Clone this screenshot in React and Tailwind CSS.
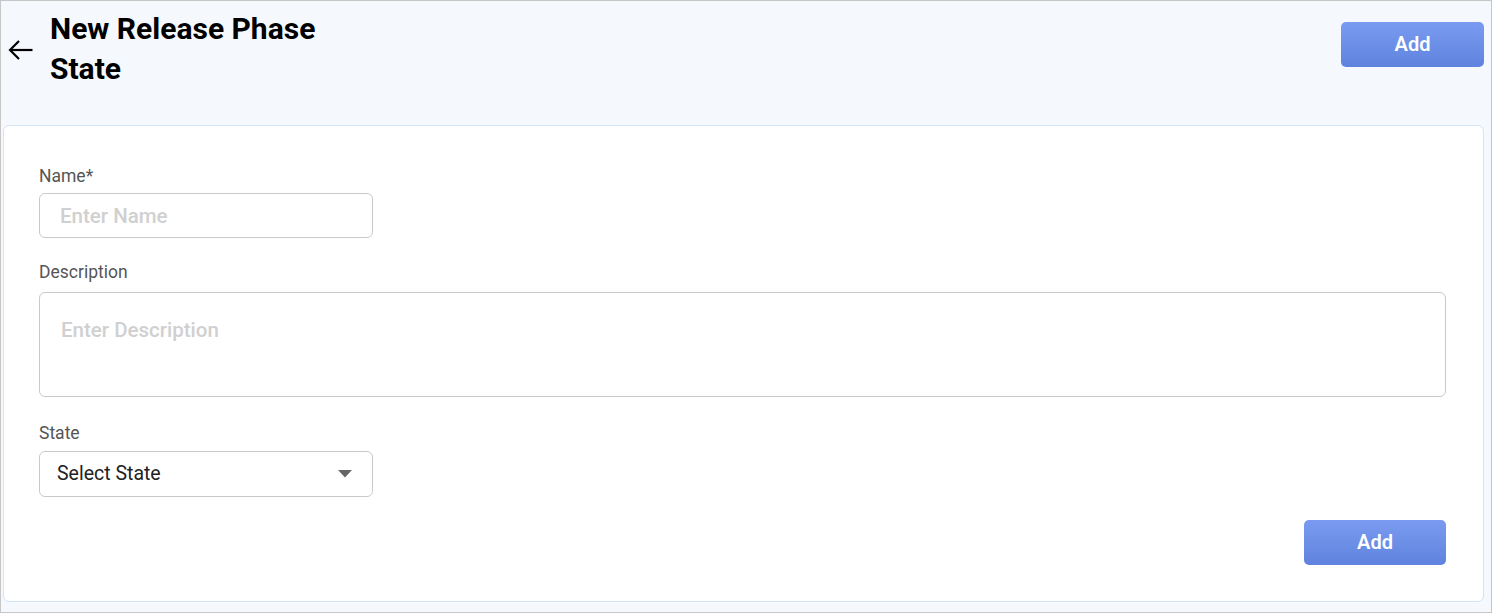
import { useState } from "react";

function BackArrow() {
  return (
    <svg width="25" height="22" viewBox="0 0 25 22" fill="none" stroke="#000" strokeWidth="2.2">
      <path d="M24.5 11H2.5" />
      <path d="M11 2L2 11l9 9" />
    </svg>
  );
}

function AddButton({ className = "" }) {
  return (
    <button
      className={`h-[45px] rounded-[5px] bg-gradient-to-b from-[#7a9bf0] to-[#5f83de] pb-[2px] text-[20px] font-semibold text-white ${className}`}
    >
      Add
    </button>
  );
}

export default function App() {
  const [name, setName] = useState("");
  const [desc, setDesc] = useState("");
  const [state, setState] = useState("");

  return (
    <div
      className="flex h-[613px] w-full flex-col border border-[#c6c6c6] bg-[#f5f8fd] pl-[2px] pr-[7px] pb-[10px]"
      style={{ fontFamily: "Roboto, 'Noto Sans', sans-serif" }}
    >
      <div className="flex h-[124px] items-start justify-between">
        <div className="flex items-start">
          <div className="ml-[5px] mt-[38px]">
            <BackArrow />
          </div>
          <h1 className="ml-[17px] mt-[8px] w-[320px] text-[30px] font-bold leading-[40px] text-black">
            New Release Phase State
          </h1>
        </div>
        <AddButton className="mt-[21px] w-[143px]" />
      </div>

      <div className="flex flex-1 flex-col rounded-[6px] border border-[#d3e4f6] bg-white pl-[35px] pr-[37px] pt-[37px]">
        <label className="text-[17.5px] leading-[26px] text-[#555]">Name*</label>
        <input
          value={name}
          onChange={(e) => setName(e.target.value)}
          placeholder="Enter Name"
          className="mt-[4px] h-[45px] w-[334px] rounded-[6px] border border-[#c9c9c9] px-[20px] text-[20.5px] font-medium text-[#222] outline-none placeholder:text-[#d0d0d0]"
        />

        <label className="mt-[21px] text-[17.5px] leading-[26px] text-[#555]">Description</label>
        <textarea
          value={desc}
          onChange={(e) => setDesc(e.target.value)}
          placeholder="Enter Description"
          className="mt-[7px] h-[105px] w-full resize-none rounded-[6px] border border-[#c9c9c9] px-[21px] pt-[24px] text-[20.5px] font-medium leading-[26px] text-[#222] outline-none placeholder:text-[#d0d0d0]"
        />

        <label className="mt-[23px] text-[17.5px] leading-[26px] text-[#555]">State</label>
        <div className="relative mt-[5px] w-[334px]">
          <select
            value={state}
            onChange={(e) => setState(e.target.value)}
            className="h-[46px] w-full appearance-none rounded-[6px] border border-[#c9c9c9] bg-white px-[17px] text-[19.5px] text-[#222] outline-none"
          >
            <option value="">Select State</option>
            <option value="active">Active</option>
            <option value="inactive">Inactive</option>
          </select>
          <svg
            width="14"
            height="8"
            viewBox="0 0 14 8"
            className="pointer-events-none absolute right-[21px] top-[19px]"
          >
            <path d="M0 0h14L7 7.5z" fill="#666" />
          </svg>
        </div>

        <div className="mt-[23px] flex justify-end">
          <AddButton className="w-[142px]" />
        </div>
      </div>
    </div>
  );
}
